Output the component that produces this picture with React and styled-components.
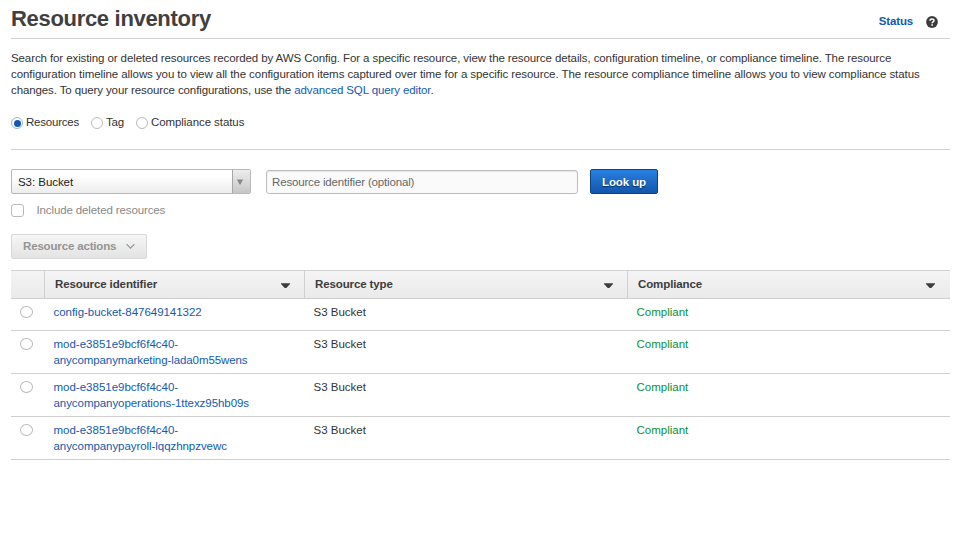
import React from "react";
import styled, { createGlobalStyle } from "styled-components";

const GlobalStyle = createGlobalStyle`
  * { box-sizing: border-box; }
  body {
    margin: 0;
    background: #fff;
    color: #333;
    font: 11.5px/16px "Liberation Sans", Arial, sans-serif;
  }
`;

const Page = styled.main`
  width: 960px;
  height: 542px;
  padding: 0 10px 0 11px;
  overflow: hidden;
`;

const Header = styled.header`
  display: flex;
  justify-content: space-between;
  height: 39px;
  border-bottom: 1px solid #d0d0d0;
`;

const Title = styled.h1`
  margin: 6px 0 0;
  font-size: 22px;
  line-height: 26px;
  font-weight: 700;
  letter-spacing: -0.31px;
  color: #404040;
`;

const HeaderLinks = styled.div`
  display: flex;
  gap: 13px;
  padding: 13px 12px 0 0;
`;

const Link = styled.a`
  color: #1259b3;
  font-weight: ${(p) => (p.$bold ? 700 : 400)};
  letter-spacing: ${(p) => (p.$bold ? "-0.15px" : "inherit")};
`;

const HelpIcon = styled.svg`
  width: 12px;
  height: 12px;
  margin-top: 3px;
`;

const Intro = styled.p`
  margin: 11px 0 0;
`;

const Line = styled.span`
  display: block;
  white-space: nowrap;
  letter-spacing: ${(p) => p.$track || "0"};
`;

const SearchModes = styled.div`
  display: flex;
  gap: 12px;
  height: 52px;
  padding-top: 16px;
  border-bottom: 1px solid #d0d0d0;
`;

const Mode = styled.label`
  display: flex;
  gap: 3px;
  white-space: nowrap;
  letter-spacing: ${(p) => p.$track || "0"};
`;

const Radio = styled.span`
  display: flex;
  align-items: center;
  justify-content: center;
  flex: none;
  width: ${(p) => p.$size || 12}px;
  height: 12px;
  margin-top: 3px;
  border: 1px solid ${(p) => (p.$checked ? "#9cb3d0" : "#bbb")};
  border-radius: 50%;
  background: #fff;
  &::after {
    content: "";
    flex: none;
    width: 7px;
    height: 7px;
    border-radius: 50%;
    background: ${(p) => (p.$checked ? "#1259b3" : "transparent")};
  }
`;

const Filters = styled.div`
  display: flex;
  align-items: flex-start;
  padding-top: 19px;
`;

const Select = styled.div`
  display: flex;
  width: 240px;
  height: 25px;
  margin-right: 15px;
  border: 1px solid #b8b8b8;
  border-radius: 2px;
  background: linear-gradient(#fff 30%, #ececec);
  overflow: hidden;
`;

const SelectValue = styled.span`
  flex: 1;
  padding: 4px 6px;
  color: #222;
  letter-spacing: -0.05px;
`;

const SelectArrow = styled.span`
  display: flex;
  justify-content: center;
  width: 18px;
  padding-top: 9px;
  border-left: 1px solid #a5a5a5;
  background: linear-gradient(#ededed, #c6c6c6);
  svg { width: 6px; height: 6px; margin-right: 4px; }
`;

const Input = styled.input`
  width: 312px;
  height: 24px;
  margin: 1px 12px 0 0;
  padding: 0 5px 1px;
  border: 1px solid #bdbdbd;
  border-radius: 3px;
  outline: 0;
  background: #fafafa;
  box-shadow: inset 0 1px 1px #e5e5e5;
  font: inherit;
  letter-spacing: -0.16px;
  &::placeholder { color: #666; opacity: 1; }
`;

const PrimaryButton = styled.button`
  width: 68px;
  height: 25px;
  padding: 0;
  border: 1px solid #0f427f;
  border-radius: 2px;
  background: linear-gradient(#2980e2, #1256ab);
  color: #fff;
  font: inherit;
  font-weight: 700;
  letter-spacing: -0.1px;
  text-shadow: 0 1px 1px #062c5c;
`;

const DeletedOption = styled.label`
  display: flex;
  gap: 12.5px;
  margin-top: 8px;
  color: #888;
  letter-spacing: -0.12px;
`;

const Checkbox = styled.span`
  width: 13px;
  height: 13px;
  margin-top: 2px;
  border: 1px solid #bbb;
  border-radius: 3px;
`;

const ActionsButton = styled.button`
  display: flex;
  align-items: center;
  gap: 10px;
  width: 136px;
  height: 25px;
  margin: 16px 0 11px;
  padding: 0 0 1px 11px;
  border: 1px solid #d9d9d9;
  border-radius: 2px;
  background: linear-gradient(#f6f6f6, #e3e3e3);
  color: #949494;
  font: inherit;
  font-weight: 700;
  letter-spacing: -0.16px;
  svg { width: 9px; height: 7px; margin-top: 1px; }
`;

const TableRow = styled.div`
  display: grid;
  grid-template-columns: 34px 260px 323px 1fr;
  min-height: 32px;
  border-bottom: 1px solid #d0d0d0;
`;

const TableHead = styled(TableRow)`
  min-height: 29px;
  height: 29px;
  border-top: 1px solid #d0d0d0;
  background: linear-gradient(#f4f4f4, #eaeaea);
`;

const HeadCell = styled.div`
  display: flex;
  justify-content: space-between;
  padding: 5px ${(p) => (p.$last ? 15 : 14)}px 0 10px;
  border-right: ${(p) => (p.$last ? 0 : "1px solid #d0d0d0")};
  color: #3c3c3c;
  font-weight: 700;
  letter-spacing: -0.11px;
  svg { width: 9px; height: 5px; margin-top: 7px; }
`;

const Cell = styled.div`
  padding: 5px 8.5px;
  color: ${(p) => (p.$compliant ? "#08913a" : "#333")};
`;

const RadioCell = styled.div`
  padding: 4px 9px;
`;

const SortArrow = () => (
  <svg viewBox="0 0 9 5"><path d="M0 .3h9v.8L5.3 5H3.7L0 1.1z" fill="#3c3c3c" /></svg>
);

const resources = [
  [{ text: "config-bucket-847649141322", track: "-0.03px" }],
  [{ text: "mod-e3851e9bcf6f4c40-" }, { text: "anycompanymarketing-lada0m55wens", track: "-0.09px" }],
  [{ text: "mod-e3851e9bcf6f4c40-" }, { text: "anycompanyoperations-1ttexz95hb09s", track: "-0.06px" }],
  [{ text: "mod-e3851e9bcf6f4c40-" }, { text: "anycompanypayroll-lqqzhnpzvewc", track: "-0.06px" }],
];

export default function App() {
  return (
    <Page>
      <GlobalStyle />
      <Header>
        <Title>Resource inventory</Title>
        <HeaderLinks>
          <Link $bold>Status</Link>
          <HelpIcon viewBox="0 0 12 12">
            <circle cx="6" cy="6" r="5.9" fill="#3c3c3c" />
            <path d="M4 4.8C4 2.4 8 2.4 8 4.6 8 6 6.1 5.9 6.1 7.3" fill="none" stroke="#fff" strokeWidth="1.6" />
            <path d="M5.3 8.2h1.6v1.5H5.3z" fill="#fff" />
          </HelpIcon>
        </HeaderLinks>
      </Header>
      <Intro>
        <Line $track="-0.097px">Search for existing or deleted resources recorded by AWS Config. For a specific resource, view the resource details, configuration timeline, or compliance timeline. The resource</Line>
        <Line $track="-0.07px">configuration timeline allows you to view all the configuration items captured over time for a specific resource. The resource compliance timeline allows you to view compliance status</Line>
        <Line $track="-0.11px">changes. To query your resource configurations, use the <Link>advanced SQL query editor</Link>.</Line>
      </Intro>
      <SearchModes>
        <Mode $track="-0.22px"><Radio $checked />Resources</Mode>
        <Mode $track="-0.2px"><Radio />Tag</Mode>
        <Mode $track="-0.07px"><Radio />Compliance status</Mode>
      </SearchModes>
      <Filters>
        <Select>
          <SelectValue>S3: Bucket</SelectValue>
          <SelectArrow><svg viewBox="0 0 6 6"><path d="M0 .5h6L3.5 5.5h-1z" fill="#888" /></svg></SelectArrow>
        </Select>
        <Input placeholder="Resource identifier (optional)" />
        <PrimaryButton>Look up</PrimaryButton>
      </Filters>
      <DeletedOption><Checkbox />Include deleted resources</DeletedOption>
      <ActionsButton>
        Resource actions
        <svg viewBox="0 0 9 7"><path d="M.6 1.2l3.9 4 3.9-4" fill="none" stroke="#949494" strokeWidth="1.2" /></svg>
      </ActionsButton>
      <TableHead>
        <HeadCell />
        <HeadCell>Resource identifier<SortArrow /></HeadCell>
        <HeadCell>Resource type<SortArrow /></HeadCell>
        <HeadCell $last>Compliance<SortArrow /></HeadCell>
      </TableHead>
      {resources.map((lines) => (
        <TableRow key={lines[lines.length - 1].text}>
          <RadioCell><Radio $size={13} /></RadioCell>
          <Cell>
            {lines.map(({ text, track }) => (
              <Line key={text} $track={track}><Link>{text}</Link></Line>
            ))}
          </Cell>
          <Cell>S3 Bucket</Cell>
          <Cell $compliant>Compliant</Cell>
        </TableRow>
      ))}
    </Page>
  );
}
